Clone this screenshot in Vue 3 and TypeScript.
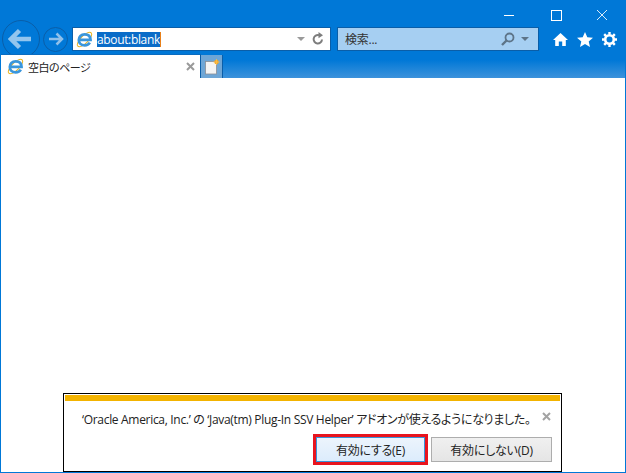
<script setup lang="ts">
const title = '空白のページ'
</script>

<template>
  <div class="window">
    <div class="controls">
      <svg width="14" height="12" viewBox="0 0 14 12" class="ctl-min"><path d="M2 6.500h10" stroke="#fff" fill="none" /></svg>
      <svg width="12" height="12" viewBox="0 0 12 12" class="ctl-max"><rect x="1.500" y="1.500" width="10" height="10" stroke="#fff" fill="none" /></svg>
      <svg width="12" height="12" viewBox="0 0 12 12" class="ctl-close"><path d="M1 1l10 10M11 1L1 11" stroke="#fff" fill="none" opacity="0.85" /></svg>
    </div>
    <div class="nav">
      <div class="back circle">
        <svg width="26" height="22" viewBox="0 0 26 22"><path d="M11.500 2.500L3 11l8.500 8.500M4 11h19" stroke="#93c5ee" stroke-width="4.500" fill="none" /></svg>
      </div>
      <div class="forward circle">
        <svg width="16" height="14" viewBox="0 0 16 14"><path d="M8.500 1.500L14 7l-5.500 5.500M13 7H1" stroke="#8fc0ea" stroke-width="2.500" fill="none" /></svg>
      </div>
      <div class="address">
        <svg class="ie" width="17" height="17" viewBox="0 0 18 18">
          <ellipse cx="9" cy="9" rx="10" ry="4" transform="rotate(-45 9 9)" stroke="#e8b21e" stroke-width="1.100" fill="none" />
          <path d="M3 9.500H15.400C15.400 5.500 13 3.500 9.200 3.500C5.400 3.500 3 6.300 3 9.500C3 12.700 5.400 15.200 9.200 15.200C11.600 15.200 13.500 14.300 14.600 12.300" stroke="#3a96dc" stroke-width="2.900" fill="none" />
        </svg>
        <span class="url">about:blank</span>
        <span class="caret"></span>
        <span class="spring"></span>
        <span class="tri grey"></span>
        <svg class="refresh" width="14" height="14" viewBox="0 0 14 14"><path d="M11 7.500A4.200 4.200 0 1 1 8 3.200" stroke="#7d7d7d" stroke-width="2" fill="none" /><path d="M7.500 0l4.500 3.300-4.500 3z" fill="#7d7d7d" /></svg>
      </div>
      <div class="search">
        <span class="search-label">検索...</span>
        <span class="spring"></span>
        <svg width="14" height="14" viewBox="0 0 14 14"><circle cx="8.500" cy="5.500" r="4" stroke="#5d7488" stroke-width="1.800" fill="none" /><path d="M5.500 8.500L1 13" stroke="#5d7488" stroke-width="2.400" /></svg>
        <span class="tri slate"></span>
      </div>
      <div class="tools">
        <svg width="15" height="15" viewBox="0 0 15 15"><path d="M7.500 1L0 8h2.200v6h3.600v-4.500h3.400V14h3.600V8H15z" fill="#fff" /></svg>
        <svg width="16" height="15" viewBox="0 0 16 15"><path d="M8 0l2.300 5.200 5.700.5-4.300 3.800 1.300 5.500L8 12l-5 3 1.300-5.500L0 5.700l5.700-.5z" fill="#fff" /></svg>
        <svg width="15" height="15" viewBox="0 0 15 15"><circle cx="7.500" cy="7.500" r="4.300" stroke="#fff" stroke-width="2.600" fill="none" /><path d="M7.500 0v15M0 7.500h15M2.200 2.200l10.600 10.600M12.800 2.200L2.200 12.800" stroke="#fff" stroke-width="2.400" stroke-dasharray="2.600 9.800" /></svg>
      </div>
    </div>
    <div class="tabs">
      <div class="tab">
        <svg class="ie" width="17" height="17" viewBox="0 0 18 18">
          <ellipse cx="9" cy="9" rx="10" ry="4" transform="rotate(-45 9 9)" stroke="#e8b21e" stroke-width="1.100" fill="none" />
          <path d="M3 9.500H15.400C15.400 5.500 13 3.500 9.200 3.500C5.400 3.500 3 6.300 3 9.500C3 12.700 5.400 15.200 9.200 15.200C11.600 15.200 13.500 14.300 14.600 12.300" stroke="#3a96dc" stroke-width="2.900" fill="none" />
        </svg>
        <span class="tab-title">{{ title }}</span>
        <span class="spring"></span>
        <svg width="9" height="9" viewBox="0 0 9 9"><path d="M1 1l7 7M8 1L1 8" stroke="#9a9a9a" stroke-width="2" /></svg>
      </div>
      <div class="new-tab">
        <svg width="16" height="16" viewBox="0 0 16 16">
          <rect x="1.500" y="2.500" width="11" height="12.500" fill="#f4f4f4" stroke="#8a8f96" stroke-width="0.800" />
          <circle cx="12.500" cy="3" r="2.200" fill="#f5a623" />
          <path d="M12.500 0v6M9.500 3h6" stroke="#f8c050" stroke-width="0.800" />
        </svg>
      </div>
    </div>
    <div class="page">
      <div class="notice">
        <div class="notice-stripe"></div>
        <div class="notice-body">
          <p class="notice-text">‘Oracle America, Inc.’ の ‘Java(tm) Plug-In SSV Helper’ アドオンが使えるようになりました。</p>
          <svg class="notice-close" width="9" height="9" viewBox="0 0 9 9"><path d="M1 1l7 7M8 1L1 8" stroke="#a3a3a3" stroke-width="2" /></svg>
        </div>
        <div class="notice-actions">
          <div class="focus-ring"><button class="btn primary">有効にする(E)</button></div>
          <button class="btn">有効にしない(D)</button>
        </div>
      </div>
    </div>
  </div>
</template>

<style>
html, body { margin: 0; padding: 0; }
</style>

<style scoped>
.window {
  width: 626px;
  height: 473px;
  box-sizing: border-box;
  display: flex;
  flex-direction: column;
  background: #0078d7;
  border: 1px solid #0078d7;
  border-top: 0;
  font-family: "Open Sans", "Noto Sans CJK JP", sans-serif;
  font-feature-settings: "palt";
  letter-spacing: -0.25px;
  color: #111;
  overflow: hidden;
}
.controls {
  height: 20px;
  display: flex;
  justify-content: flex-end;
  padding-top: 9px;
  box-sizing: border-box;
}
.ctl-min { margin-right: 34px; }
.ctl-max { margin-right: 34px; }
.ctl-close { margin-right: 17px; }
.nav {
  height: 34px;
  box-sizing: border-box;
  padding: 4px 0 0 1px;
  display: flex;
  align-items: center;
}
.circle {
  box-sizing: border-box;
  border-radius: 50%;
  border: 1px solid #0a5ea8;
  display: flex;
  align-items: center;
  justify-content: center;
}
.back { width: 38px; height: 38px; flex: none; }
.forward { width: 25px; height: 25px; flex: none; margin-left: 3px; }
.address {
  width: 259px;
  height: 24px;
  box-sizing: border-box;
  margin-left: 4px;
  background: #fff;
  border: 1px solid #0a5ea8;
  display: flex;
  align-items: center;
  padding: 0 4px 0 3px;
  flex: none;
}
.ie { flex: none; overflow: visible; }
.url {
  margin-left: 4px;
  background: #0a6cc8;
  color: #fff;
  font-size: 12px;
  line-height: 15px;
  letter-spacing: -0.35px;
}
.caret { width: 1px; height: 15px; background: #e8801a; }
.spring { flex: 1; }
.tri {
  width: 0;
  height: 0;
  border-left: 4px solid transparent;
  border-right: 4px solid transparent;
  border-top: 4px solid #9a9a9a;
}
.tri.grey { margin-right: 6px; }
.refresh { margin-right: 1px; }
.search {
  width: 202px;
  height: 24px;
  box-sizing: border-box;
  margin-left: 6px;
  background: #a6cff2;
  border: 1px solid #0a5ea8;
  display: flex;
  align-items: center;
  padding: 0 8px 0 7px;
  flex: none;
}
.search-label { font-size: 12px; color: #333; }
.tri.slate { border-top-color: #5d7488; margin-left: 6px; margin-right: 1px; }
.tools {
  display: flex;
  align-items: center;
  gap: 9px;
  margin-left: 14px;
}
.tabs {
  height: 24px;
  display: flex;
  background: linear-gradient(180deg, #0078d7 25%, #3d92db 100%);
}
.tab {
  width: 200px;
  box-sizing: border-box;
  background: #fff;
  border-top: 1px solid #0a6cc0;
  display: flex;
  align-items: center;
  padding: 0 5px 0 6px;
  border-right: 1px solid #0a5ea8;
}
.tab-title { font-size: 11px; letter-spacing: -0.5px; margin-left: 4px; color: #222; }
.new-tab {
  width: 22px;
  height: 23px;
  box-sizing: border-box;
  margin-top: 1px;
  background: #6ea6d6;
  border-right: 1px solid #0a5ea8;
  display: flex;
  align-items: center;
  justify-content: center;
}
.page {
  flex: 1;
  background: #fff;
  display: flex;
  flex-direction: column;
  justify-content: flex-end;
  align-items: center;
}
.notice {
  width: 499px;
  height: 79px;
  box-sizing: border-box;
  background: #fff;
  border: 1px solid #000;
  padding: 1px;
  display: flex;
  flex-direction: column;
  margin-right: 1px;
}
.notice-stripe { height: 6px; background: #f3b300; flex: none; }
.notice-body {
  display: flex;
  justify-content: space-between;
  box-sizing: border-box;
  padding: 10px 9px 0 15px;
  height: 33px;
  flex: none;
}
.notice-text { margin: 0 0 0 2px; font-size: 12px; line-height: 18px; letter-spacing: -0.31px; color: #222; white-space: nowrap; }
.notice-close { margin-top: 1px; }
.notice-actions {
  display: flex;
  align-items: flex-start;
  justify-content: flex-end;
  gap: 3px;
  padding-right: 8px;
}
.focus-ring { border: 3px solid #e8141e; display: flex; }
.btn {
  box-sizing: border-box;
  width: 121px;
  height: 25px;
  margin-top: 3px;
  padding: 0;
  border: 1px solid #adadad;
  background: linear-gradient(180deg, #f0f0f0, #e5e5e5);
  font-family: inherit;
  font-feature-settings: inherit;
  letter-spacing: inherit;
  font-size: 12px;
  color: #222;
}
.btn.primary {
  width: 109px;
  margin-top: 0;
  border: 1px solid #3a92d8;
  background: linear-gradient(180deg, #ecf4fc, #dcecfc);
}
</style>
